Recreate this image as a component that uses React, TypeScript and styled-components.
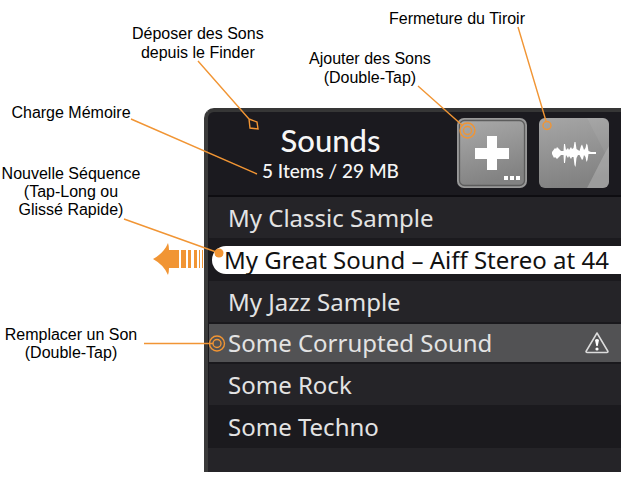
import React from "react";
import styled, { createGlobalStyle } from "styled-components";

const ORANGE = "#f19534";

const GlobalStyle = createGlobalStyle`
  * { box-sizing: border-box; }
  body { margin: 0; background: #fff; }
`;

const Figure = styled.main`
  position: relative;
  display: grid;
  grid-template-columns: 204px minmax(0, 1fr);
  grid-template-rows: 108px auto;
  padding: 0 7px 11px 0;
  font-family: "Liberation Sans", Arial, sans-serif;
  color: #000;
`;

const TopNotes = styled.div`
  grid-column: 1 / -1;
  display: flex;
  align-items: flex-start;
  padding-left: 132px;
`;

const SideNotes = styled.div`
  width: 142px;
  display: flex;
  flex-direction: column;
  align-items: center;
`;

const Note = styled.p<{ $top: number; $line?: number; $right?: number; $push?: boolean }>`
  margin: ${(p) => p.$top}px ${(p) => p.$right ?? 0}px 0 ${(p) => (p.$push ? "auto" : 0)};
  font-size: 16px;
  line-height: ${(p) => p.$line ?? 18}px;
  text-align: center;
  white-space: nowrap;
`;

const EndNotes = styled.div`
  display: flex;
  flex-direction: column;
  margin-left: auto;
  width: 312px;
  align-items: flex-start;
`;

const Drawer = styled.section`
  display: flex;
  flex-direction: column;
  overflow: hidden;
  min-width: 0;
  background: #1b1a1f;
  border-top: 4px solid #363636;
  border-left: 4px solid #3a3a3a;
  border-radius: 10px 0 0 0;
`;

const DrawerHeader = styled.header`
  display: flex;
  align-items: center;
  gap: 12px;
  height: 85px;
  padding: 0 12px 2px 8px;
  border-bottom: 2px solid #0e0d11;
`;

const Heading = styled.div`
  flex: 1;
  text-align: center;
  font-family: Lato, "Noto Sans", sans-serif;
  color: #f6f6f6;
`;

const Title = styled.h1`
  margin: 0;
  font-size: 31px;
  font-weight: 500;
  line-height: 36px;
`;

const Summary = styled.p`
  margin: 0;
  font-size: 19px;
  font-weight: 500;
  line-height: 26px;
`;

const Tile = styled.button`
  flex: none;
  width: 70px;
  height: 70px;
  padding: 0;
  border: 0;
  background: none;
  svg { display: block; }
`;

const List = styled.ul`
  margin: 0;
  padding: 0;
  list-style: none;
`;

type Tone = "light" | "dark" | "marked";
const tones: Record<Tone, { fill: string; height: number }> = {
  light: { fill: "#252428", height: 41 },
  dark: { fill: "#1b1a1e", height: 43 },
  marked: { fill: "#525254", height: 42 },
};

const Row = styled.li<{ $tone: Tone }>`
  display: flex;
  align-items: center;
  height: ${(p) => tones[p.$tone].height}px;
  padding-left: 3px;
  background: ${(p) => tones[p.$tone].fill};
  border: solid #1a191d;
  border-width: ${(p) => (p.$tone === "marked" ? "2px 0 2px 1px" : "0 0 0 1px")};
`;

const Sound = styled.button<{ $selected?: boolean }>`
  display: flex;
  align-items: center;
  justify-content: space-between;
  width: 100%;
  height: 28px;
  padding: 0 12px 0 ${(p) => (p.$selected ? 12 : 16)}px;
  border: 0;
  border-radius: 14px 0 0 14px;
  white-space: nowrap;
  background: ${(p) => (p.$selected ? "#fff" : "transparent")};
  color: ${(p) => (p.$selected ? "#111" : "#e3e3e3")};
  font-family: "Noto Sans", sans-serif;
  font-size: 24px;
  line-height: 34px;
  svg { flex: none; }
`;

const LastStrip = styled.div`
  height: 24px;
  background: ${tones.light.fill};
`;

const Leaders = styled.svg<{ $end?: boolean }>`
  position: absolute;
  top: 0;
  ${(p) => (p.$end ? "right: 0;" : "left: 0;")}
  pointer-events: none;
  fill: none;
  stroke: ${ORANGE};
  stroke-width: 1.4;
`;

const PlusArt = () => (
  <svg width="70" height="70" viewBox="0 0 70 70" aria-hidden="true">
    <defs>
      <linearGradient id="plusFace" x1="0" y1="0" x2="0.3" y2="1">
        <stop offset="0" stopColor="#aaa" />
        <stop offset="1" stopColor="#828282" />
      </linearGradient>
    </defs>
    <rect width="70" height="70" rx="7" fill="#999" />
    <rect x="2.5" y="2.5" width="65" height="65" rx="5" fill="url(#plusFace)" stroke="#5c5c5c" strokeWidth="1.3" />
    <path d="M30 18h10v12h12v11H40v11H30V41H18V30h12z" fill="#fff" />
    <path d="M47 58h4v4h-4zM53 58h4v4h-4zM59 58h4v4h-4z" fill="#fff" />
  </svg>
);

const WaveArt = () => (
  <svg width="70" height="70" viewBox="0 0 70 70" aria-hidden="true">
    <defs>
      <linearGradient id="waveFace" x1="0" y1="0" x2="0.2" y2="1">
        <stop offset="0" stopColor="#a6a6a6" />
        <stop offset="1" stopColor="#828282" />
      </linearGradient>
      <clipPath id="waveClip"><rect width="70" height="70" rx="6" /></clipPath>
    </defs>
    <g clipPath="url(#waveClip)">
      <rect width="70" height="70" fill="url(#waveFace)" />
      <path d="M48 0l18 35-18 35h22V0z" fill="#fff" fillOpacity="0.06" />
      <path d="M66 35L48 70h22V28z" fill="#fff" fillOpacity="0.16" />
    </g>
    <path
      fill="#fff"
      d="M13 34L16 30 17 31 18 29 20 31 22 33 24.500 33 25 26 26 26 27 32 29 30 30 32 32 29 33 31 34.500 30 35.500 24 36.500 24 37.500 31 39 32 40.500 33 42 28 43 26.500 44 29 45 32 46.500 30 47.500 25.500 48.500 27 49.500 33 52 34 57 34 57 36 52 36 49.500 36 48.500 42 47.500 44 46.500 39 45 37 44 41 43 42 42 40 40.500 37 39 37 37.500 40 36.500 49 35.500 47 34.500 39 33 39 32 41 30 38 29 40 27 37 26 45 25 45 24.500 37 22 37 20 39 18 41 16 39 15 40 13 36z"
    />
  </svg>
);

const WarningArt = () => (
  <svg width="24" height="22" viewBox="0 0 24 22" role="img" aria-label="Warning" fill="none">
    <path d="M12 1L23 19.500q0 1-1 1H2q-1 0-1-1z" stroke="#dcdcdc" strokeWidth="1.5" strokeLinejoin="round" />
    <path d="M10 8q2-2 4 0l-1.300 6h-1.400z" fill="#fff" />
    <circle cx="12" cy="17" r="1.600" fill="#fff" />
  </svg>
);

const sounds: { name: string; tone: Tone; selected?: boolean; warning?: boolean }[] = [
  { name: "My Classic Sample", tone: "light" },
  { name: "My Great Sound – Aiff Stereo at 44", tone: "dark", selected: true },
  { name: "My Jazz Sample", tone: "light" },
  { name: "Some Corrupted Sound", tone: "marked", warning: true },
  { name: "Some Rock", tone: "light" },
  { name: "Some Techno", tone: "dark" },
];

export default function App() {
  return (
    <>
      <GlobalStyle />
      <Figure>
        <TopNotes>
          <Note $top={24} $line={19}>Déposer des Sons<br />depuis le Finder</Note>
          <EndNotes>
            <Note $top={10} $push $right={96}>Fermeture du Tiroir</Note>
            <Note $top={21} $line={19}>Ajouter des Sons<br />(Double-Tap)</Note>
          </EndNotes>
        </TopNotes>
        <SideNotes>
          <Note $top={-4}>Charge Mémoire</Note>
          <Note $top={43}>Nouvelle Séquence<br />(Tap-Long ou<br />Glissé Rapide)</Note>
          <Note $top={107}>Remplacer un Son<br />(Double-Tap)</Note>
        </SideNotes>
        <Drawer>
          <DrawerHeader>
            <Heading>
              <Title>Sounds</Title>
              <Summary>5 Items / 29 MB</Summary>
            </Heading>
            <Tile aria-label="Add sounds"><PlusArt /></Tile>
            <Tile aria-label="Close drawer"><WaveArt /></Tile>
          </DrawerHeader>
          <List>
            {sounds.map((s) => (
              <Row key={s.name} $tone={s.tone}>
                <Sound $selected={s.selected}>
                  {s.name}
                  {s.warning && <WarningArt />}
                </Sound>
              </Row>
            ))}
          </List>
          <LastStrip />
        </Drawer>
        <Leaders width="270" height="370" viewBox="0 0 270 370" aria-hidden="true">
          <path d="M198 61l51 58M249 119l8 3 1 7-8-1zM131 119l126 55M124 219l95 34" />
          <path d="M144 343.500h69" />
          <circle cx="217" cy="343.500" r="7.500" />
          <circle cx="217" cy="343.500" r="4" />
          <circle cx="219" cy="253" r="4.500" fill={ORANGE} stroke="none" />
          <path
            d="M153 259q11-6 15-16 1 3 1 7h10v18h-10q0 4-1 7-4-10-15-16zM181 250h5v18h-5zM188 250h3v18h-3zM194 250h3v18h-3zM199 250h1v18h-1zM202 250h1v18h-1z"
            fill={ORANGE}
            stroke="none"
          />
        </Leaders>
        <Leaders $end width="228" height="140" viewBox="400 0 228 140" aria-hidden="true">
          <path d="M418 86l45 40M518 27l28 94" />
          <circle cx="467.500" cy="130.500" r="7.500" />
          <circle cx="467.500" cy="130.500" r="4" />
          <circle cx="547" cy="125.500" r="4" />
        </Leaders>
      </Figure>
    </>
  );
}
